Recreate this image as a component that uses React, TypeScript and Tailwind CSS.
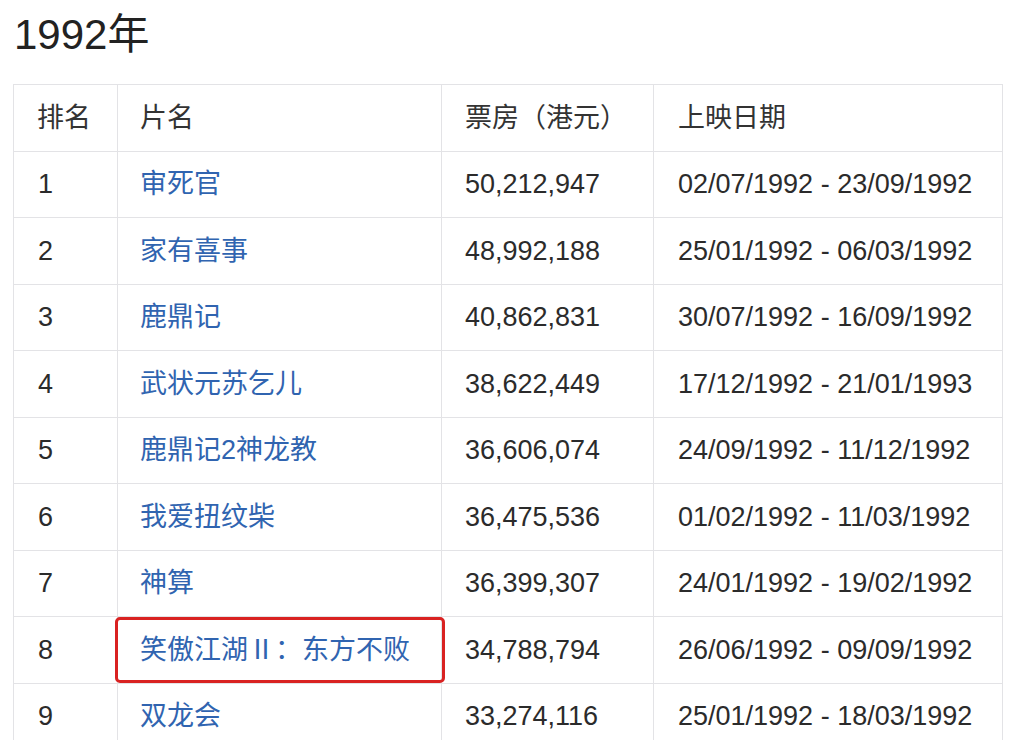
const rows = [
  ["1", "审死官", "50,212,947", "02/07/1992 - 23/09/1992"],
  ["2", "家有喜事", "48,992,188", "25/01/1992 - 06/03/1992"],
  ["3", "鹿鼎记", "40,862,831", "30/07/1992 - 16/09/1992"],
  ["4", "武状元苏乞儿", "38,622,449", "17/12/1992 - 21/01/1993"],
  ["5", "鹿鼎记2神龙教", "36,606,074", "24/09/1992 - 11/12/1992"],
  ["6", "我爱扭纹柴", "36,475,536", "01/02/1992 - 11/03/1992"],
  ["7", "神算", "36,399,307", "24/01/1992 - 19/02/1992"],
  ["8", "笑傲江湖Ⅱ：东方不败", "34,788,794", "26/06/1992 - 09/09/1992"],
  ["9", "双龙会", "33,274,116", "25/01/1992 - 18/03/1992"],
];

const pads = ["pl-[23px]", "pl-[22px]", "pl-[23px]", "pl-[24px]"];

export default function App() {
  return (
    <div
      className="w-[1024px] h-[740px] overflow-hidden bg-white pl-[13px] text-[#2b2b2b]"
      style={{ fontFamily: '"Liberation Sans", "Noto Sans CJK SC", sans-serif' }}
    >
      <h1 className="pt-[11px] pl-px text-[42px] leading-[48px] font-normal text-[#222]">
        1992年
      </h1>
      <table className="mt-[25px] w-[989px] border-collapse table-fixed text-[27px]">
        <colgroup>
          <col className="w-[104px]" />
          <col className="w-[324px]" />
          <col className="w-[212px]" />
          <col className="w-[349px]" />
        </colgroup>
        <thead>
          <tr className="h-[66.5px]">
            {["排名", "片名", "票房（港元）", "上映日期"].map((h, i) => (
              <th
                key={h}
                className={`border border-[#e3e3e6] ${pads[i]} text-left font-normal text-[#333] whitespace-nowrap`}
              >
                {h}
              </th>
            ))}
          </tr>
        </thead>
        <tbody>
          {rows.map(([rank, title, gross, dates]) => (
            <tr key={rank} className="h-[66.5px]">
              <td className="border border-[#e3e3e6] pl-[24px]">{rank}</td>
              <td className="relative border border-[#e3e3e6] pl-[22px] text-[#3064b0] whitespace-nowrap">
                {title}
                {rank === "8" && (
                  <div className="absolute left-[-3px] right-[-4px] top-0 bottom-0 rounded-[5px] border-[3px] border-[#d92222]" />
                )}
              </td>
              <td className="border border-[#e3e3e6] pl-[23px]">{gross}</td>
              <td className="border border-[#e3e3e6] pl-[24px] whitespace-nowrap">{dates}</td>
            </tr>
          ))}
        </tbody>
      </table>
    </div>
  );
}
